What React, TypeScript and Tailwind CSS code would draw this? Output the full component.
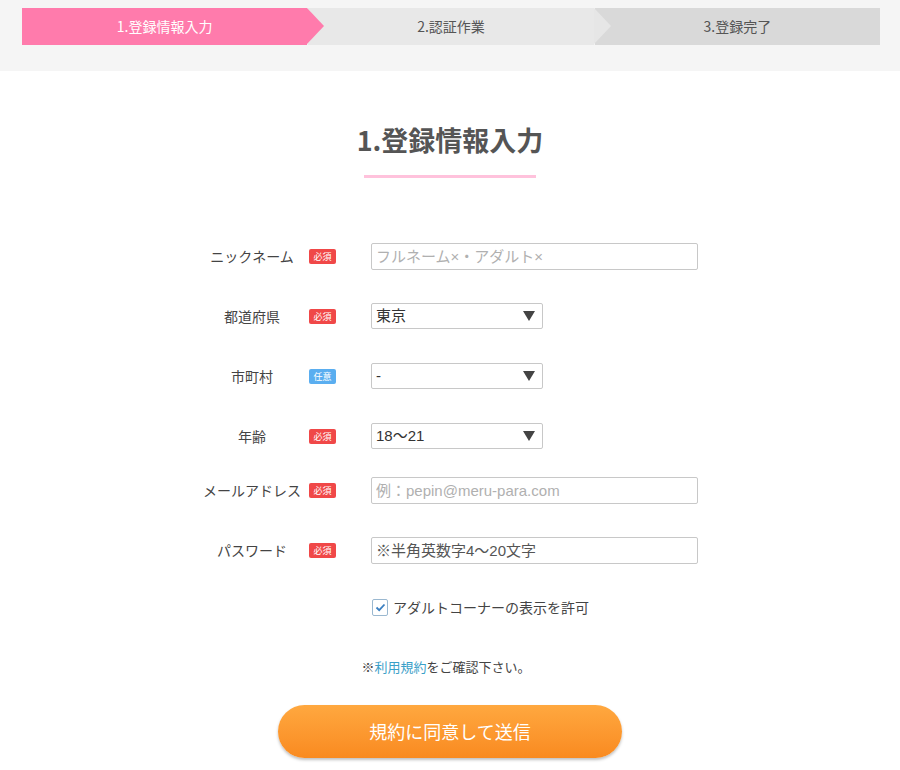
const font = { fontFamily: '"Noto Sans CJK JP", "Noto Sans", sans-serif' };
const inputFont = { fontFamily: '"Liberation Sans", "Noto Sans CJK JP", sans-serif' };

const steps = [
  { label: "1.登録情報入力", bg: "bg-[#ff7bac]", text: "text-white", arrow: "border-l-[#ff7bac]" },
  { label: "2.認証作業", bg: "bg-[#e8e8e8]", text: "text-[#555]", arrow: "border-l-[#e6e6e6]" },
  { label: "3.登録完了", bg: "bg-[#d9d9d9]", text: "text-[#555]", arrow: "" },
];

const Badge = ({ optional }: { optional?: boolean }) => (
  <span
    className={`ml-[5px] w-[27px] h-[15px] flex items-center justify-center rounded-[2px] text-[9px] leading-none text-white ${
      optional ? "bg-[#5aaef0]" : "bg-[#f04848]"
    }`}
  >
    {optional ? "任意" : "必須"}
  </span>
);

const Select = ({ value }: { value: string }) => (
  <div
    className="ml-[35px] w-[172px] h-[26px] border border-[#c8c8c8] rounded-[2px] flex items-center justify-between pl-[4px] pr-[7px] text-[15px] text-[#333] bg-white"
    style={inputFont}
  >
    <span>{value}</span>
    <svg width="12" height="10" viewBox="0 0 12 10">
      <path d="M0 0 H12 L6 10 Z" fill="#444" />
    </svg>
  </div>
);

const TextInput = ({ placeholder, dark }: { placeholder: string; dark?: boolean }) => (
  <input
    type="text"
    placeholder={placeholder}
    className={`ml-[35px] w-[327px] h-[27px] border border-[#c8c8c8] rounded-[2px] px-[4px] text-[15px] outline-none ${
      dark ? "placeholder:text-[#555]" : "placeholder:text-[#b0b0b0]"
    }`}
    style={inputFont}
  />
);

const Row = ({
  label,
  optional,
  h,
  children,
}: {
  label: string;
  optional?: boolean;
  h: string;
  children: React.ReactNode;
}) => (
  <div className={`flex items-center ${h}`}>
    <div className="w-[104px] text-center text-[14px] text-[#444]">{label}</div>
    <Badge optional={optional} />
    {children}
  </div>
);

export default function App() {
  return (
    <div className="w-[900px] min-h-[770px] bg-white" style={font}>
      <div className="bg-[#f5f5f5] h-[71px] pt-[8px] pl-[22px] pr-[20px]">
        <div className="flex h-[37px]">
          {steps.map((s, i) => (
            <div
              key={i}
              className={`relative flex-1 flex items-center justify-center text-[14px] ${s.bg} ${s.text} ${
                i > 0 ? "border-l border-[#f2f2f2]" : ""
              }`}
            >
              {s.label}
              {s.arrow && (
                <span
                  className={`absolute top-0 right-[-17px] z-10 w-0 h-0 border-y-[18.5px] border-y-transparent border-l-[17px] ${s.arrow}`}
                />
              )}
            </div>
          ))}
        </div>
      </div>

      <div className="flex flex-col items-center pt-[51px]">
        <h1 className="text-[27px] font-bold text-[#555] leading-[36px]">1.登録情報入力</h1>
        <div className="mt-[17px] w-[172px] h-[3px] bg-[#ffc2dc]" />
      </div>

      <div className="w-[500px] mx-auto mt-[48px]">
        <Row label="ニックネーム" h="h-[60px]">
          <TextInput placeholder="フルネーム×・アダルト×" />
        </Row>
        <Row label="都道府県" h="h-[60px]">
          <Select value="東京" />
        </Row>
        <Row label="市町村" optional h="h-[60px]">
          <Select value="-" />
        </Row>
        <Row label="年齢" h="h-[60px]">
          <Select value="18〜21" />
        </Row>
        <Row label="メールアドレス" h="h-[48px]">
          <TextInput placeholder="例：pepin@meru-para.com" />
        </Row>
        <Row label="パスワード" h="h-[72px]">
          <TextInput placeholder="※半角英数字4〜20文字" dark />
        </Row>

        <div className="mt-[10px] ml-[172px] flex items-center h-[22px]">
          <span className="w-[16px] h-[17px] border border-[#9ab8d0] rounded-[2px] bg-white flex items-center justify-center">
            <svg width="11" height="9" viewBox="0 0 11 9">
              <path d="M1.5 4.5 L4.2 7.2 L9.5 1.5" fill="none" stroke="#3a7fc1" strokeWidth="1.8" />
            </svg>
          </span>
          <span className="ml-[5px] text-[14px] text-[#444]">アダルトコーナーの表示を許可</span>
        </div>
      </div>

      <p className="mt-[39px] text-center text-[13px] text-[#444] leading-[20px] pr-[8px]">
        ※<a className="text-[#3aa0c8]">利用規約</a>をご確認下さい。
      </p>

      <div className="flex justify-center mt-[28px]">
        <button
          className="w-[344px] h-[53px] rounded-full bg-gradient-to-b from-[#ffa83f] to-[#f98a1f] text-white text-[18px] shadow-[0_2px_3px_rgba(0,0,0,0.25)]"
          style={font}
        >
          規約に同意して送信
        </button>
      </div>
    </div>
  );
}
